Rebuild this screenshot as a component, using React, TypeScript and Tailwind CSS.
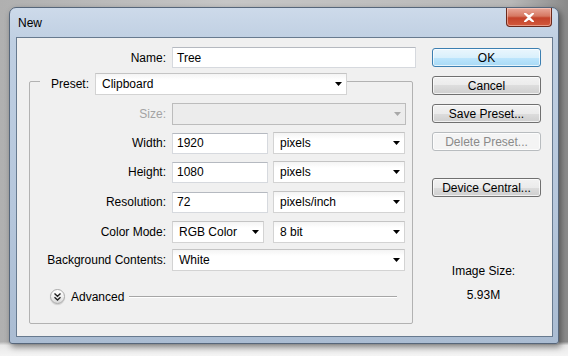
import React from "react";

const font = { fontFamily: '"Liberation Sans", Arial, sans-serif' };

function Arrow({ disabled }: { disabled?: boolean }) {
  return (
    <svg width="7" height="4" viewBox="0 0 7 4" className="shrink-0">
      <path d="M0 0H7L3.5 4Z" fill={disabled ? "#a8a8a8" : "#000"} />
    </svg>
  );
}

function Select({ value, w, disabled }: { value: string; w: string; disabled?: boolean }) {
  return (
    <div
      className={`${w} h-[22px] flex items-center justify-between pl-[6px] pr-[4px] border ${
        disabled
          ? "bg-[#ececec] border-[#bcbcbc]"
          : "bg-[linear-gradient(to_bottom,#f4f4f4_0%,#ffffff_30%,#ffffff_100%)] border-[#d3d3d3] border-t-[#c4c4c4]"
      } text-[12px] text-black`}
    >
      <span className="leading-none">{value}</span>
      <Arrow disabled={disabled} />
    </div>
  );
}

function Input({ value, w }: { value: string; w: string }) {
  return (
    <div className={`${w} h-[21px] flex items-center pl-[4px] bg-white border border-[#d6d9de] border-t-[#b5b9c0] text-[12px] leading-none`}>
      {value}
    </div>
  );
}

function Btn({ label, kind }: { label: string; kind?: "ok" | "disabled" }) {
  const cls =
    kind === "ok"
      ? "border-[#3c7fb1] bg-[linear-gradient(to_bottom,#eaf6fd_0%,#d9f0fc_50%,#bee6fd_50%,#a7d9f5_100%)] text-black"
      : kind === "disabled"
      ? "border-[#b8bcbf] bg-[#f4f4f4] text-[#8a8a8a]"
      : "border-[#707070] bg-[linear-gradient(to_bottom,#f2f2f2_0%,#ebebeb_50%,#dddddd_50%,#cfcfcf_100%)] text-black";
  return (
    <div
      className={`w-[109px] h-[19px] rounded-[3px] border ${cls} shadow-[inset_0_0_0_1px_rgba(255,255,255,0.7)] flex items-center justify-center text-[12px] leading-none`}
    >
      {label}
    </div>
  );
}

function Row({ label, children, mt, disabled }: { label: string; children: React.ReactNode; mt: string; disabled?: boolean }) {
  return (
    <div className={`flex items-center ${mt}`}>
      <div className={`w-[136px] text-right text-[12px] leading-none ${disabled ? "text-[#a3a3a3]" : "text-black"}`}>{label}</div>
      <div className="ml-[6px] flex items-center">{children}</div>
    </div>
  );
}

export default function App() {
  return (
    <div
      className="w-[568px] h-[356px] overflow-hidden bg-[linear-gradient(to_bottom,transparent_0%,transparent_96%,#e8e8e8_97%,#f4f4f4_100%),linear-gradient(to_right,#b0b0b0_0%,#c6c6c6_40%,#b8b8b8_90%,#8a8a8a_100%)] pl-[9px] pt-[7px]"
      style={font}
    >
      <div className="w-[550px] h-[337px] rounded-t-[7px] rounded-b-[3px] border border-[#56667a] bg-[linear-gradient(to_bottom,#cddaea_0%,#bfcfe2_10%,#b6c7dc_60%,#aabcd2_100%)] shadow-[2px_3px_6px_rgba(0,0,0,0.45)] flex flex-col">
        <div className="h-[29px] flex items-start justify-between">
          <div className="pl-[8px] pt-[9px] text-[12px] leading-none text-black">New</div>
          <div className="mr-[6px] mt-0 w-[46px] h-[19px] rounded-b-[4px] border border-[#6b2a1d] border-t-0 bg-[linear-gradient(to_bottom,#e9a99b_0%,#d67862_45%,#c4432b_55%,#d2593c_100%)] shadow-[inset_0_0_0_1px_rgba(255,220,210,0.5)] flex items-center justify-center">
            <svg width="10" height="9" viewBox="0 0 10 9">
              <path d="M1 0.5L5 3.5L9 0.5M1 8.5L5 5.5L9 8.5M5 4.5L1 0.5M5 4.5L9 0.5M5 4.5L1 8.5M5 4.5L9 8.5" stroke="#fff" strokeWidth="2" fill="none" strokeLinecap="round" />
            </svg>
          </div>
        </div>
        <div className="ml-[6px] w-[537px] h-[300px] border border-[#677a8f] bg-[#f0f0f0] flex">
          <div className="w-[399px] flex flex-col">
            <div className="flex items-center mt-[9px]">
              <div className="w-[149px] text-right text-[12px] leading-none">Name:</div>
              <div className="ml-[6px]">
                <Input value="Tree" w="w-[244px]" />
              </div>
            </div>
            <fieldset className="ml-[12px] w-[384px] border border-[#b2b2b2] rounded-[2px] pb-[19px]">
              <legend className="ml-[10px] pl-[11px] pt-[5px] flex items-center">
                <span className="w-[38px] text-[12px] leading-none">Preset:</span>
                <span className="ml-[6px]">
                  <Select value="Clipboard" w="w-[252px]" />
                </span>
              </legend>
              <Row label="Size:" mt="mt-[8px]" disabled>
                <Select value="" w="w-[234px]" disabled />
              </Row>
              <Row label="Width:" mt="mt-[7px]">
                <Input value="1920" w="w-[96px]" />
                <div className="ml-[5px]">
                  <Select value="pixels" w="w-[132px]" />
                </div>
              </Row>
              <Row label="Height:" mt="mt-[7px]">
                <Input value="1080" w="w-[96px]" />
                <div className="ml-[5px]">
                  <Select value="pixels" w="w-[132px]" />
                </div>
              </Row>
              <Row label="Resolution:" mt="mt-[8px]">
                <Input value="72" w="w-[96px]" />
                <div className="ml-[5px]">
                  <Select value="pixels/inch" w="w-[132px]" />
                </div>
              </Row>
              <Row label="Color Mode:" mt="mt-[8px]">
                <Select value="RGB Color" w="w-[92px]" />
                <div className="ml-[9px]">
                  <Select value="8 bit" w="w-[132px]" />
                </div>
              </Row>
              <Row label="Background Contents:" mt="mt-[6px]">
                <Select value="White" w="w-[233px]" />
              </Row>
              <div className="mt-[18px] pl-[20px] flex items-center">
                <div className="w-[15px] h-[15px] rounded-full border border-[#a9a9a9] bg-[linear-gradient(to_bottom,#ffffff_0%,#f0f0f0_50%,#d8d8d8_100%)] shadow-[0_1px_1px_rgba(0,0,0,0.15)] flex items-center justify-center">
                  <svg width="7" height="8" viewBox="0 0 7 8">
                    <path d="M0.5 0.5L3.5 3.2L6.5 0.5M0.5 4.3L3.5 7L6.5 4.3" stroke="#222" strokeWidth="1.4" fill="none" />
                  </svg>
                </div>
                <span className="ml-[6px] text-[12px] leading-none">Advanced</span>
                <div className="ml-[5px] mr-[15px] flex-1 h-[2px] border-t border-[#a6a6a6] border-b-[#ffffff] border-b" />
              </div>
            </fieldset>
          </div>
          <div className="ml-[16px] w-[109px] flex flex-col">
            <div className="mt-[10px]">
              <Btn label="OK" kind="ok" />
            </div>
            <div className="mt-[9px]">
              <Btn label="Cancel" />
            </div>
            <div className="mt-[9px]">
              <Btn label="Save Preset..." />
            </div>
            <div className="mt-[9px]">
              <Btn label="Delete Preset..." kind="disabled" />
            </div>
            <div className="mt-[27px]">
              <Btn label="Device Central..." />
            </div>
            <div className="mt-[68px] text-center text-[12px] leading-none pr-[6px]">Image Size:</div>
            <div className="mt-[12px] text-center text-[12px] leading-none pr-[6px]">5.93M</div>
          </div>
        </div>
      </div>
    </div>
  );
}
